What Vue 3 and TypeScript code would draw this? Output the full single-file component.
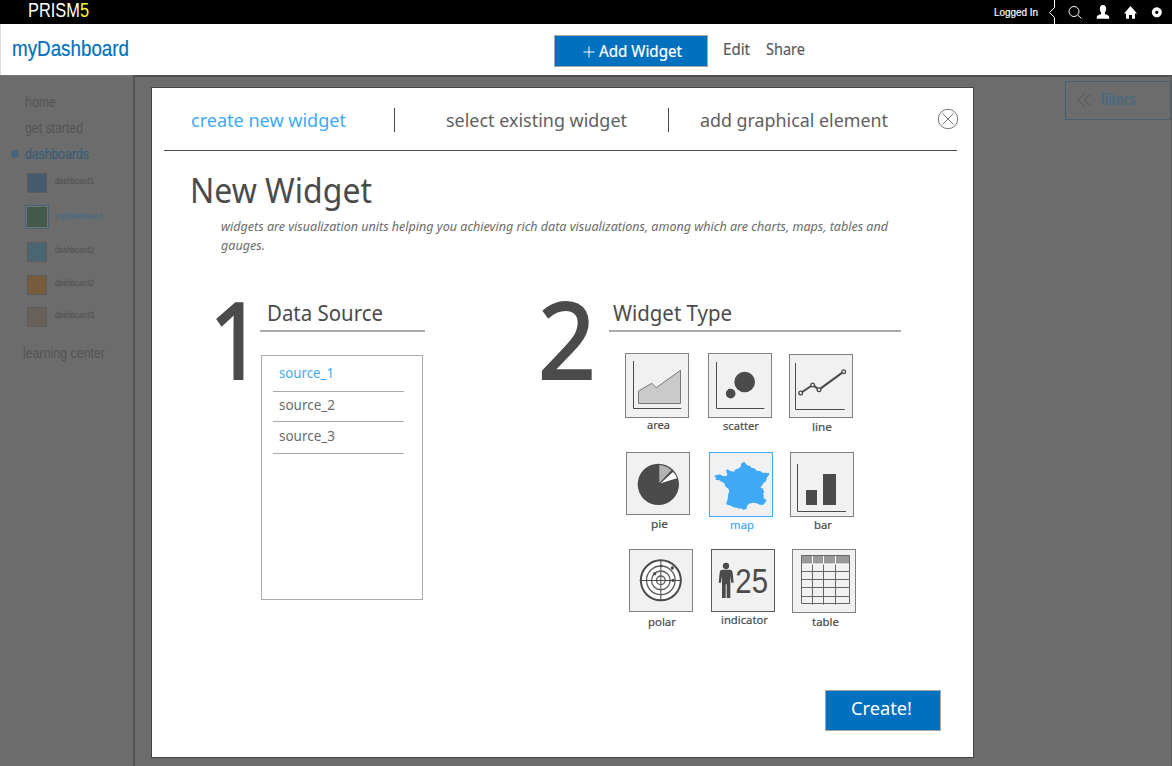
<script setup lang="ts">
interface Dashboard {
  name: string
  color: string
  gap: number
  active?: boolean
}

interface WidgetType {
  id: string
  labelWidth: number
  height: number
  indent: number
  drop: number
  labelDrop: number
}

const dashboards: Dashboard[] = [
  { name: 'dashboard1', color: '#455a6c', gap: 0 },
  { name: 'myDashboard', color: '#43594b', gap: 12, active: true },
  { name: 'dashboard2', color: '#4a6673', gap: 12 },
  { name: 'dashboard2', color: '#765b3d', gap: 12 },
  { name: 'dashboard3', color: '#67615a', gap: 11 },
]

const sources = [
  { name: 'source_1', width: 55, height: 36 },
  { name: 'source_2', width: 56, height: 30 },
  { name: 'source_3', width: 56, height: 32 },
]

const widgets: WidgetType[] = [
  { id: 'area', labelWidth: 23, height: 65, indent: 0, drop: 0, labelDrop: -1 },
  { id: 'scatter', labelWidth: 36, height: 65, indent: 0, drop: 0, labelDrop: 0 },
  { id: 'line', labelWidth: 20, height: 64, indent: 0, drop: 1, labelDrop: 1 },
  { id: 'pie', labelWidth: 17, height: 63, indent: 1, drop: 0, labelDrop: 1 },
  { id: 'map', labelWidth: 24, height: 65, indent: 1, drop: 0, labelDrop: 0 },
  { id: 'bar', labelWidth: 18, height: 65, indent: 1, drop: 0, labelDrop: 0 },
  { id: 'polar', labelWidth: 28, height: 63, indent: 4, drop: 0, labelDrop: 2 },
  { id: 'indicator', labelWidth: 47, height: 63, indent: 3, drop: 0, labelDrop: 0 },
  { id: 'table', labelWidth: 27, height: 64, indent: 3, drop: 0, labelDrop: 1 },
]

const selectedWidget = 'map'

// Condenses or widens a text run so that it occupies the given width.
const vFit = {
  mounted(el: HTMLElement, binding: { value: number }) {
    const natural = el.getBoundingClientRect().width
    el.style.width = `${binding.value}px`
    el.style.transform = `scaleX(${binding.value / natural})`
  },
}
</script>

<template>
  <div class="page">
    <header class="topbar">
      <div class="brand"><span v-fit="61" class="fit">PRISM<b>5</b></span></div>
      <div class="account">
        <span v-fit="44" class="fit logged">Logged In</span>
        <svg class="notch" width="8" height="24" viewBox="0 0 8 24"><path d="M6.5 0V7.5L1.5 12.5L6.5 17.5V24" /></svg>
        <svg class="tools" width="98" height="24" viewBox="0 0 98 24">
          <circle cx="13" cy="11.5" r="5" class="thin" />
          <path d="M16.800 15.200L20.500 18.500" class="thin" />
          <path d="M42 5c2.300 0 3.300 1.800 3.200 4 0 1.700-.8 2.700-1.300 3.500v1.500c1.500 1 4.300 1 4.300 3V18.800H35.800V17c0-2 2.800-2 4.300-3v-1.500C39.500 11.700 38.800 10.700 38.800 9 38.700 6.800 39.700 5 42 5z" />
          <path d="M69.500 6L76 13.500H74V18.700H71V15H68V18.700H65V13.500H63z" />
          <path d="M95.500 7a5 5 0 1 0 .01 0zM95.500 10.500a1.600 1.600 0 1 1-.01 0z" fill-rule="evenodd" transform="translate(.3 .3)" />
        </svg>
      </div>
    </header>

    <div class="titlebar">
      <h1><span v-fit="117" class="fit">myDashboard</span></h1>
      <button class="add">
        <svg width="12" height="12" viewBox="0 0 12 12"><path d="M6 .5V11.500M.5 6H11.500" /></svg>
        <span v-fit="83" class="fit">Add Widget</span>
      </button>
      <span v-fit="27" class="fit link edit">Edit</span>
      <span v-fit="39" class="fit link">Share</span>
    </div>

    <div class="body">
      <nav class="sidebar">
        <a class="home"><span v-fit="31" class="fit">home</span></a>
        <a><span v-fit="58" class="fit">get started</span></a>
        <a class="current"><i class="dot"></i><span v-fit="64" class="fit">dashboards</span></a>
        <ul>
          <li v-for="(d, i) in dashboards" :key="i" :class="{ active: d.active }" :style="{ marginTop: d.gap + 'px' }">
            <span class="frame"><i class="swatch" :style="{ background: d.color }"></i></span>
            <span v-fit="d.active ? 47 : 39" class="fit">{{ d.name }}</span>
          </li>
        </ul>
        <a class="learn"><span v-fit="82" class="fit">learning center</span></a>
      </nav>
      <main class="canvas">
        <div class="filters">
          <svg width="15" height="14" viewBox="0 0 15 14"><path d="M7 1L1 7L7 13M13.500 1L7.500 7L13.500 13" /></svg>
          <span v-fit="35" class="fit">filters</span>
        </div>
      </main>
    </div>

    <section class="modal">
      <div class="tabs">
        <span v-fit="155" class="fit active">create new widget</span>
        <i class="sep first"></i>
        <span v-fit="181" class="fit">select existing widget</span>
        <i class="sep second"></i>
        <span v-fit="188" class="fit">add graphical element</span>
        <svg class="close" width="22" height="22" viewBox="0 0 22 22">
          <circle cx="11" cy="11" r="9.700" />
          <path d="M5.500 5.500L16.500 16.500M16.500 5.500L5.500 16.500" />
        </svg>
      </div>

      <h2><span v-fit="182" class="fit">New Widget</span></h2>
      <p class="intro">
        <span v-fit="667" class="fit">widgets are visualization units helping you achieving rich data visualizations, among which are charts, maps, tables and</span>
        <span v-fit="44" class="fit">gauges.</span>
      </p>

      <div class="steps">
        <div class="number one"><span v-fit="54" class="fit">1</span></div>
        <div class="source">
          <h3><span v-fit="116" class="fit">Data Source</span></h3>
          <ul class="list">
            <li v-for="(s, i) in sources" :key="s.name" :class="{ active: i === 0 }" :style="{ height: s.height + 'px' }">
              <span v-fit="s.width" class="fit">{{ s.name }}</span>
            </li>
          </ul>
        </div>
        <div class="number two"><span v-fit="58" class="fit">2</span></div>
        <div class="type">
          <h3><span v-fit="119" class="fit">Widget Type</span></h3>
          <div class="grid">
            <figure
              v-for="w in widgets"
              :key="w.id"
              :class="{ selected: w.id === selectedWidget, dark: w.id === 'indicator' }"
              :style="{ marginLeft: w.indent + 'px', marginTop: w.drop + 'px' }"
            >
              <div class="tile" :style="{ height: w.height + 'px' }">
                <svg width="62" :height="w.height - 2" :viewBox="`3 3 186 ${w.height * 3 - 6}`">
                  <g v-if="w.id === 'area'">
                    <path class="axis" d="M25.500 24V166.500H169" />
                    <path d="M40.500 114L80 91L94 104L166.500 52V151.500H40.500Z" fill="#cacaca" stroke="#777" stroke-width="3" />
                  </g>
                  <g v-else-if="w.id === 'scatter'">
                    <path class="axis" d="M25.500 27V166.500H169" />
                    <circle cx="110" cy="87" r="31" />
                    <circle cx="68" cy="122" r="14.500" />
                  </g>
                  <g v-else-if="w.id === 'line'">
                    <path class="axis" d="M19.500 27V166.500H167" />
                    <path d="M35 117L71 93L90 107L164 53" fill="none" stroke="#4b4b4b" stroke-width="6" />
                    <g fill="#f1f1f1" stroke="#4b4b4b" stroke-width="4">
                      <circle cx="35" cy="117" r="5.500" />
                      <circle cx="71" cy="93" r="5.500" />
                      <circle cx="90" cy="107" r="5.500" />
                      <circle cx="164" cy="53" r="5.500" />
                    </g>
                  </g>
                  <g v-else-if="w.id === 'pie'">
                    <circle cx="97" cy="97" r="62" />
                    <path d="M100 93V39Q120 40 136 55Z" fill="#b3b3b3" />
                    <path d="M104 94L141 60Q150 68 153 79Z" fill="#fff" />
                  </g>
                  <path
                    v-else-if="w.id === 'map'"
                    class="land"
                    transform="translate(-297 -36)"
                    d="M312 108L320 105L330 103L336 107L348 109L352 105L348 91L353 88L360 93L373 95L375 89L388 84L392 80L394 70L403 66L408 71L410 75L420 78L425 84L433 85L440 92L452 94L458 98L478 99L477 105L471 112L468 124L460 130L457 136L452 141L453 145L459 144L460 151L463 156L459 161L462 167L460 173L470 181L464 190L459 195L449 194L440 190L428 188L417 191L411 198L410 207L400 209L392 205L385 206L383 203L370 202L363 197L348 193L353 178L355 160L358 157L356 147L347 140L342 128L334 125L329 121L316 119L319 114Z"
                  />
                  <g v-else-if="w.id === 'bar'">
                    <path class="axis" d="M22.500 36V178.500H168" />
                    <path d="M48 114H81V159H48zM99 66H138V159H99z" />
                  </g>
                  <g v-else-if="w.id === 'polar'">
                    <circle cx="95.500" cy="94" r="60" fill="#fff" stroke="#4b4b4b" stroke-width="6" />
                    <g fill="none" stroke="#5c5c5c" stroke-width="4">
                      <circle cx="95.500" cy="94" r="43" />
                      <circle cx="95.500" cy="94" r="28" />
                      <circle cx="95.500" cy="94" r="13" />
                    </g>
                    <path class="axis" d="M95.500 32V157M32 94.500H158" />
                    <circle cx="130" cy="57" r="5" />
                    <circle cx="77" cy="74" r="5" />
                    <circle cx="132" cy="94" r="5" />
                    <circle cx="97" cy="51" r="4" />
                  </g>
                  <g v-else-if="w.id === 'indicator'">
                    <circle cx="45" cy="51" r="9.500" />
                    <path d="M33 62H57Q64 62 65 71L68 101H61L58 80V147H47V106H44V147H33V80L30 101H23L26 71Q27 62 33 62Z" />
                    <text x="73" y="132" textLength="98" lengthAdjust="spacingAndGlyphs">25</text>
                  </g>
                  <g v-else>
                    <path d="M28 19H173V45H28z" fill="#999" />
                    <path d="M28.500 19.500H172.500V163.500H28.500zM28 67.500H173M28 91.500H173M28 115.500H173M28 142.500H173M61.500 45V167M94.500 45V167M130.500 45V167" fill="none" stroke="#666" stroke-width="3" />
                    <path d="M30 45H171M61.500 21V45M94.500 21V45M130.500 21V45" stroke="#fff" stroke-width="3" />
                  </g>
                </svg>
              </div>
              <figcaption :style="{ marginTop: w.labelDrop + 'px' }">
                <span v-fit="w.labelWidth" class="fit">{{ w.id }}</span>
              </figcaption>
            </figure>
          </div>
        </div>
      </div>

      <button class="create"><span v-fit="61" class="fit">Create!</span></button>
    </section>
  </div>
</template>

<style>
html,
body {
  margin: 0;
  overflow: hidden;
}
</style>

<style scoped>
.page {
  position: relative;
  width: 1172px;
  height: 766px;
  display: flex;
  flex-direction: column;
  overflow: hidden;
  background: #6c6c6c;
  font-family: "Noto Sans", "Open Sans", sans-serif;
  color: #4b4b4b;
}
h1, h2, h3, p, ul, figure {
  margin: 0;
  padding: 0;
  font-weight: 400;
  list-style: none;
}
button {
  box-sizing: border-box;
  margin: 0;
  padding: 0;
  border: 1px solid #a7a7a7;
  background: #0071bf;
  color: #fff;
  font-family: inherit;
  text-align: left;
}
.fit {
  display: inline-block;
  flex: none;
  white-space: nowrap;
  transform-origin: 0 50%;
}

.topbar {
  flex: none;
  height: 24px;
  display: flex;
  justify-content: space-between;
  background: #000;
  color: #fff;
  font-family: "Liberation Sans", Arial, sans-serif;
}
.brand {
  padding-left: 27.500px;
  font-size: 19.500px;
  line-height: 20px;
}
.brand b {
  font-weight: 400;
  color: #fff32a;
}
.account {
  display: flex;
}
.logged {
  font-size: 11.500px;
  line-height: 24px;
  -webkit-text-stroke: .2px;
}
.notch {
  margin-left: 10px;
  fill: none;
  stroke: #fff;
}
.tools {
  margin: 0 13px 0 5px;
  fill: #fff;
  overflow: visible;
}
.tools .thin {
  fill: none;
  stroke: #fff;
}

.titlebar {
  box-sizing: border-box;
  flex: none;
  height: 51px;
  display: flex;
  align-items: flex-start;
  border-left: 1px solid #ddd;
  background: #fff;
}
h1 {
  width: 542px;
  padding-left: 11px;
  font: 21.500px/26px "Liberation Sans", Arial, sans-serif;
  color: #0071bf;
  margin-top: 12px;
  -webkit-text-stroke: .2px;
}
.add {
  width: 154px;
  height: 32px;
  margin-top: 11px;
  padding-left: 28px;
  display: flex;
  font-size: 15.500px;
  line-height: 31px;
  -webkit-text-stroke: .2px;
}
.add svg {
  margin: 10px 4px 0 0;
  fill: none;
  stroke: #fff;
}
.link {
  margin-top: 14px;
  margin-right: 16px;
  font-size: 15.500px;
  line-height: 22px;
  color: #5b5b5b;
  -webkit-text-stroke: .2px;
}
.edit {
  margin-left: 15px;
}

.body {
  flex: 1;
  display: flex;
  font-family: "Liberation Sans", Arial, sans-serif;
}
.sidebar {
  width: 133px;
  border-top: 1px solid #777;
  font-size: 15px;
  color: #545454;
}
.sidebar a {
  display: flex;
  align-items: center;
  height: 26px;
  padding-left: 25px;
}
.sidebar .home {
  margin-top: 12px;
}
.sidebar .current {
  padding-left: 11px;
  color: #3a5d77;
  -webkit-text-stroke: .2px;
}
.dot {
  width: 8px;
  height: 8px;
  margin: 2px 6px 0 0;
  border-radius: 50%;
  background: #486478;
}
.sidebar ul {
  margin-top: 6px;
  font-size: 8.500px;
  color: #525252;
  -webkit-text-stroke: .1px;
}
.sidebar li {
  display: flex;
  align-items: center;
  height: 21px;
  padding-left: 27px;
}
.sidebar li .fit {
  margin-bottom: 3px;
}
.sidebar li.active {
  height: 24px;
  padding-left: 25px;
  color: #456a85;
}
.frame {
  margin-right: 8px;
}
.swatch {
  box-sizing: border-box;
  display: block;
  width: 20px;
  height: 20px;
  border: 1px solid #5c5c5c;
}
.active .frame {
  border: 1px solid #466378;
  margin-right: 6px;
}
.active .swatch {
  width: 22px;
  height: 22px;
  border-color: #6f7470;
}
.sidebar .learn {
  margin-top: 12px;
  padding-left: 23px;
}
.canvas {
  flex: 1;
  border-top: 2px solid #505050;
  border-left: 2px solid #555;
  border-right: 1px solid #5a5a5a;
}
.filters {
  box-sizing: border-box;
  width: 106px;
  height: 39px;
  margin: 4px 0 0 auto;
  padding: 0 0 2px 11px;
  display: flex;
  align-items: center;
  border: 1px solid #48606f;
  font-size: 16px;
  color: #466a83;
  -webkit-text-stroke: .2px;
}
.filters svg {
  margin-right: 9px;
  fill: none;
  stroke: #555;
}

.modal {
  position: absolute;
  left: 151px;
  top: 87px;
  box-sizing: border-box;
  width: 823px;
  height: 671px;
  border: 1px solid #454545;
  background: #fff;
}
.tabs {
  box-sizing: border-box;
  display: flex;
  align-items: flex-start;
  width: 793px;
  height: 63px;
  margin-left: 12px;
  padding: 20px 0 0 27px;
  border-bottom: 1px solid #4b4b4b;
  font-size: 18.300px;
  line-height: 24px;
  color: #5f5f5f;
}
.tabs .active {
  color: #3fa9f5;
}
.sep {
  flex: none;
  width: 1px;
  height: 24px;
  background: #4b4b4b;
}
.first {
  margin: 0 51px 0 48px;
}
.second {
  margin: 0 31px 0 41px;
}
.close {
  flex: none;
  margin: 0 0 0 49px;
  fill: none;
  stroke: #777;
}
h2 {
  height: 48px;
  margin: 15px 0 0 38px;
  font-size: 35px;
  line-height: 48px;
}
.intro {
  height: 38px;
  margin: 3px 0 0 69px;
  font-size: 12.800px;
  line-height: 19px;
  font-style: italic;
  color: #6b6b6b;
}
.intro .fit {
  display: block;
  width: max-content;
}
.steps {
  display: flex;
  align-items: flex-start;
  margin: 43px 0 0 54px;
}
.number {
  box-sizing: border-box;
  flex: none;
  margin-top: -3px;
  font-size: 106px;
  line-height: 86px;
  height: 86px;
  -webkit-text-stroke: 2px #4b4b4b;
}
.one {
  width: 54px;
  padding-left: 3px;
}
.two {
  width: 71px;
  margin-left: 113px;
}
.source {
  width: 165px;
}
.type {
  width: 292px;
}
h3 {
  height: 32px;
  padding-left: 6.500px;
  border-bottom: 2px solid #aaa;
  font-size: 21.300px;
  line-height: 29px;
}
.type h3 {
  padding-left: 4px;
}
.list {
  box-sizing: border-box;
  width: 162px;
  height: 245px;
  margin: 23px 0 0 1px;
  padding: 0 18px 0 11px;
  border: 1px solid #aaa;
}
.list li {
  box-sizing: border-box;
  padding: 0 0 4px 6px;
  display: flex;
  align-items: center;
  border-bottom: 1px solid #aaa;
  font-size: 13.700px;
  line-height: 20px;
  color: #6b6b6b;
}
.list .active {
  padding-bottom: 2px;
  color: #3fa9f5;
}
.grid {
  display: grid;
  grid-template-columns: 83px 81px 80px;
  grid-template-rows: 99px 97px 97px;
  margin: 21px 0 0 16px;
}
figure {
  width: 64px;
}
.tile {
  box-sizing: border-box;
  border: 1px solid #808080;
  background: #f1f1f1;
}
.tile svg {
  display: block;
  fill: #4b4b4b;
}
.axis {
  fill: none;
  stroke: #4b4b4b;
  stroke-width: 3px;
}
.tile text {
  font: 103px "Liberation Sans", Arial, sans-serif;
}
.dark .tile {
  border-color: #5a5a5a;
}
figcaption {
  display: flex;
  justify-content: center;
  padding-left: 2px;
  font-size: 11.600px;
  line-height: 16px;
  -webkit-text-stroke: .2px;
}
.selected .tile {
  border-color: #3fa9f5;
}
.selected .land {
  fill: #3fa9f5;
}
.selected figcaption {
  color: #3fa9f5;
}
.create {
  position: absolute;
  left: 673px;
  top: 602px;
  width: 116px;
  height: 41px;
  padding: 0 0 5px 25px;
  font-size: 18.800px;
  line-height: 34px;
}
</style>
